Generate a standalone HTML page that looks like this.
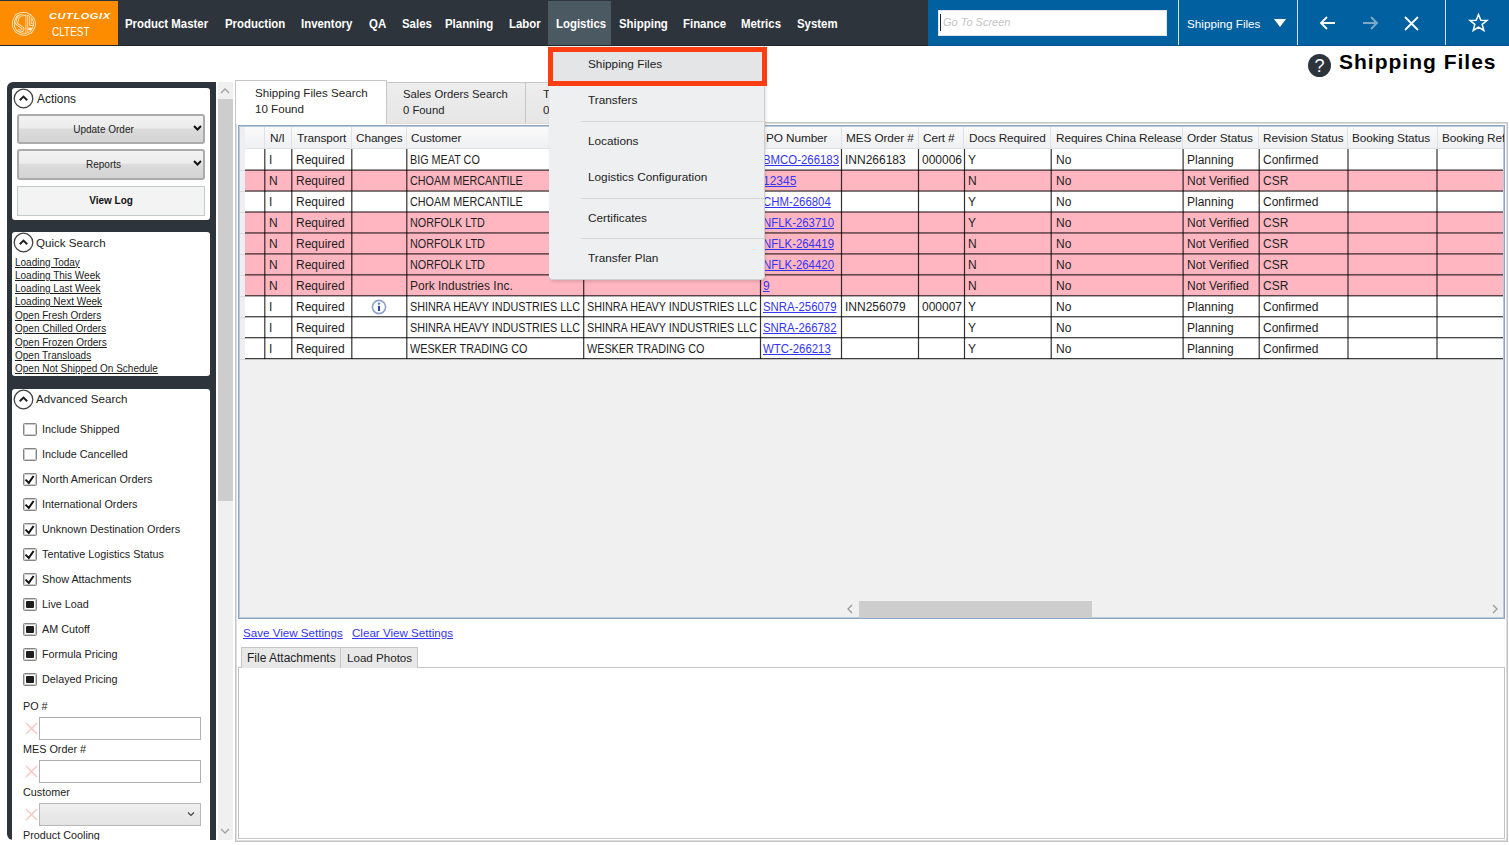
<!DOCTYPE html><html><head><meta charset="utf-8"><title>Shipping Files</title><style>
*{box-sizing:border-box;margin:0;padding:0}
html,body{width:1509px;height:845px;overflow:hidden;background:#fff;font-family:"Liberation Sans",sans-serif;color:#1e1e1e}
body{position:relative}
.a{position:absolute;white-space:nowrap}
.nav{top:17px;font-weight:bold;font-size:12.7px;color:#fff;line-height:15px;transform:scaleX(0.9);transform-origin:0 0}
.vsep{top:0;width:1px;height:45px;background:#cfe0ee}
.box{background:#fff;border-radius:3px}
.circ{width:19px;height:19px;border:1.3px solid #3a3a3a;border-radius:50%}
.ttl{font-size:12px;color:#222;line-height:14px}
.btn{border:2px solid #ababab;border-radius:3px;background:linear-gradient(#f2f2f2 0,#ececec 45%,#dcdcdc 50%,#d3d3d3 100%);font-size:10px;text-align:center;color:#222}
.ql{font-size:10px;color:#1a1a1a;text-decoration:underline;line-height:12px;left:15px}
.cb{width:14px;height:13px;border:1px solid #858585;box-shadow:inset 0 0 0 1px rgba(140,140,140,0.45);border-radius:1.5px;background:#fff;left:23px}
.cbl{font-size:10.8px;color:#222;left:42px;line-height:13px}
.lbl{font-size:10.8px;color:#222;left:23px;line-height:13px}
.inp{left:39px;width:162px;height:23px;border:1px solid #b0b0b0;background:#fff}
.xic{left:25px;width:13px;height:13px}
.row{left:245px;width:1258px;height:21px}
.cell{font-size:12px;line-height:14px;color:#1e1e1e}
.uc{transform:scaleX(0.9);transform-origin:0 0}
.uc2{transform:scaleX(0.95);transform-origin:0 0}
.lnk{color:#3434f4;text-decoration:underline}
.vl{width:2px;background:linear-gradient(90deg,#1e1e1e 50%,#767676 50%)}
.hl{height:2px;background:linear-gradient(#767676 50%,#2a2a2a 50%)}
.hd{font-size:12px;line-height:14px;color:#222;top:131px;letter-spacing:-0.1px}
.hsep{top:127px;width:1px;height:21px;background:#dfe2e5}
.mi{font-size:11.8px;color:#222;left:588px;line-height:14px}
.msep{left:581px;width:183px;height:1px;background:#d6d6d6}
</style></head><body>
<div class="a" style="left:0;top:0;width:1509px;height:46px;background:#2e343b;border-bottom:1px solid #23282d"></div>
<div class="a" style="left:0;top:1px;width:118px;height:44px;background:#fd8c00"></div>
<svg class="a" style="left:8px;top:8px" width="32" height="32" viewBox="0 0 32 32" fill="none" stroke-linejoin="round" stroke-linecap="round">
<g stroke="#ffe6c0" stroke-width="2.7">
<path d="M8.3 7.3 L12.6 5.4 L18 5.5 L22.5 7.8 L25.5 11.4 L26.8 15.9 L25.6 20.1 L22.9 24.2 L18.1 26.3 L12.6 25.9 L8.2 23.4 L5.5 18.7 L5.4 13.4 Z"/><path d="M17.2 6.7 Q11 6.6 10.2 9.6 L8.4 15.6 L15 20.3 Q15.6 23 12.5 23.2 L10.9 22.6"/><path d="M18.8 6 V24.6"/><path d="M22.3 9 V16.6 H24.4"/><path d="M21.4 20.9 H22.8"/>
</g>
<g stroke="#fd8c00" stroke-width="1">
<path d="M8.3 7.3 L12.6 5.4 L18 5.5 L22.5 7.8 L25.5 11.4 L26.8 15.9 L25.6 20.1 L22.9 24.2 L18.1 26.3 L12.6 25.9 L8.2 23.4 L5.5 18.7 L5.4 13.4 Z"/><path d="M17.2 6.7 Q11 6.6 10.2 9.6 L8.4 15.6 L15 20.3 Q15.6 23 12.5 23.2 L10.9 22.6"/><path d="M18.8 6 V24.6"/><path d="M22.3 9 V16.6 H24.4"/>
</g>
</svg>
<div class="a" style="left:49px;top:11px;font-size:9px;font-weight:bold;font-style:italic;color:#fff;letter-spacing:0.5px;line-height:10px;transform:scaleX(1.22);transform-origin:0 0">CUTLOGIX</div>
<div class="a" style="left:52px;top:25px;font-size:12.5px;color:#fff;line-height:14px;transform:scaleX(0.8);transform-origin:0 0">CLTEST</div>
<div class="a" style="left:548px;top:1px;width:63px;height:44px;background:#4b5963"></div>
<div class="a nav" style="left:125px">Product Master</div>
<div class="a nav" style="left:225px">Production</div>
<div class="a nav" style="left:301px">Inventory</div>
<div class="a nav" style="left:369px">QA</div>
<div class="a nav" style="left:402px">Sales</div>
<div class="a nav" style="left:445px">Planning</div>
<div class="a nav" style="left:509px">Labor</div>
<div class="a nav" style="left:556px">Logistics</div>
<div class="a nav" style="left:619px">Shipping</div>
<div class="a nav" style="left:683px">Finance</div>
<div class="a nav" style="left:741px">Metrics</div>
<div class="a nav" style="left:797px">System</div>
<div class="a" style="left:928px;top:0;width:581px;height:46px;background:#0060a0;border-bottom:1px solid #00538a"></div>
<div class="a" style="left:938px;top:10px;width:229px;height:26px;background:#fff;border:1px solid #dde6ee"></div>
<div class="a" style="left:940px;top:14px;width:1px;height:17px;background:#222"></div>
<div class="a" style="left:943px;top:15px;font-size:11px;font-style:italic;color:#c4c4c4;line-height:14px">Go To Screen</div>
<div class="a vsep" style="left:1178px"></div>
<div class="a vsep" style="left:1297px"></div>
<div class="a vsep" style="left:1445px"></div>
<div class="a" style="left:1187px;top:17px;font-size:11.7px;color:#fff;line-height:14px">Shipping Files</div>
<svg class="a" style="left:1273px;top:18px" width="14" height="10" viewBox="0 0 14 10"><path d="M1 1 H13 L7 9 Z" fill="#fff"/></svg>
<svg class="a" style="left:1318px;top:14px" width="20" height="18" viewBox="0 0 20 18" fill="none" stroke="#fff" stroke-width="1.8"><path d="M17 9 H3 M9 3 L3 9 L9 15"/></svg>
<svg class="a" style="left:1360px;top:14px" width="20" height="18" viewBox="0 0 20 18" fill="none" stroke="#7fa9c9" stroke-width="1.8"><path d="M3 9 H17 M11 3 L17 9 L11 15"/></svg>
<svg class="a" style="left:1403px;top:15px" width="17" height="17" viewBox="0 0 17 17" fill="none" stroke="#fff" stroke-width="1.8"><path d="M2 2 L15 15 M15 2 L2 15"/></svg>
<svg class="a" style="left:1468px;top:13px" width="21" height="19" viewBox="0 0 21 19" fill="none" stroke="#fff" stroke-width="1.5" stroke-linejoin="miter"><path d="M10.5 1.5 L12.8 7.2 L19 7.5 L14.2 11.4 L15.8 17.5 L10.5 14.1 L5.2 17.5 L6.8 11.4 L2 7.5 L8.2 7.2 Z"/></svg>
<div class="a" style="left:1308px;top:54px;width:23px;height:23px;border-radius:50%;background:#2e343b"></div>
<div class="a" style="left:1308px;top:56px;width:23px;text-align:center;font-size:18px;font-weight:normal;color:#fff;line-height:20px">?</div>
<div class="a" style="left:1339px;top:50px;font-size:21px;font-weight:bold;color:#000;line-height:24px;letter-spacing:1px">Shipping Files</div>
<div class="a" style="left:7px;top:82px;width:209px;height:758px;background:#2e343b;border-radius:6px 0 0 6px"></div>
<div class="a box" style="left:12px;top:88px;width:198px;height:132px"></div>
<div class="a box" style="left:12px;top:232px;width:198px;height:144px"></div>
<div class="a" style="left:12px;top:389px;width:198px;height:451px;background:#fff;border-radius:3px 3px 0 0"></div>
<svg class="a" style="left:13px;top:88px" width="21" height="21" viewBox="0 0 21 21"><circle cx="10.5" cy="10.5" r="9.3" fill="#fff" stroke="#444" stroke-width="1.3"/><path d="M6.8 12.3 L10.5 8.6 L14.2 12.3" fill="none" stroke="#222" stroke-width="2"/></svg>
<div class="a ttl" style="left:37px;top:92px;font-size:11.9px">Actions</div>
<svg class="a" style="left:13px;top:232px" width="21" height="21" viewBox="0 0 21 21"><circle cx="10.5" cy="10.5" r="9.3" fill="#fff" stroke="#444" stroke-width="1.3"/><path d="M6.8 12.3 L10.5 8.6 L14.2 12.3" fill="none" stroke="#222" stroke-width="2"/></svg>
<div class="a ttl" style="left:36px;top:236px;font-size:11.6px">Quick Search</div>
<svg class="a" style="left:13px;top:389px" width="21" height="21" viewBox="0 0 21 21"><circle cx="10.5" cy="10.5" r="9.3" fill="#fff" stroke="#444" stroke-width="1.3"/><path d="M6.8 12.3 L10.5 8.6 L14.2 12.3" fill="none" stroke="#222" stroke-width="2"/></svg>
<div class="a ttl" style="left:36px;top:392px;font-size:11.6px">Advanced Search</div>
<div class="a btn" style="left:17px;top:114px;width:188px;height:30px;line-height:27px;padding-right:15px">Update Order</div>
<svg class="a" style="left:193px;top:125px" width="9" height="6" viewBox="0 0 9 6"><path d="M1 1 L4.5 4.5 L8 1" fill="none" stroke="#111" stroke-width="2"/></svg>
<div class="a btn" style="left:17px;top:149px;width:188px;height:31px;line-height:28px;padding-right:15px">Reports</div>
<svg class="a" style="left:193px;top:160px" width="9" height="6" viewBox="0 0 9 6"><path d="M1 1 L4.5 4.5 L8 1" fill="none" stroke="#111" stroke-width="2"/></svg>
<div class="a" style="left:17px;top:186px;width:188px;height:30px;border:1.5px solid #c5caca;background:#f3f3f3;font-size:10px;font-weight:bold;text-align:center;line-height:27px;color:#111">View Log</div>
<div class="a ql" style="top:256.5px">Loading Today</div>
<div class="a ql" style="top:270px">Loading This Week</div>
<div class="a ql" style="top:283px">Loading Last Week</div>
<div class="a ql" style="top:296px">Loading Next Week</div>
<div class="a ql" style="top:309.5px">Open Fresh Orders</div>
<div class="a ql" style="top:322.5px">Open Chilled Orders</div>
<div class="a ql" style="top:336.5px">Open Frozen Orders</div>
<div class="a ql" style="top:349.5px">Open Transloads</div>
<div class="a ql" style="top:362.5px">Open Not Shipped On Schedule</div>
<div class="a cb" style="top:423px"></div>
<div class="a cbl" style="top:423px">Include Shipped</div>
<div class="a cb" style="top:448px"></div>
<div class="a cbl" style="top:448px">Include Cancelled</div>
<div class="a cb" style="top:473px"></div>
<svg class="a" style="left:23px;top:473px" width="14" height="14" viewBox="0 0 14 14"><path d="M2.5 6.6 L5.8 9.9 L10.6 3" fill="none" stroke="#111" stroke-width="2"/></svg>
<div class="a cbl" style="top:473px">North American Orders</div>
<div class="a cb" style="top:498px"></div>
<svg class="a" style="left:23px;top:498px" width="14" height="14" viewBox="0 0 14 14"><path d="M2.5 6.6 L5.8 9.9 L10.6 3" fill="none" stroke="#111" stroke-width="2"/></svg>
<div class="a cbl" style="top:498px">International Orders</div>
<div class="a cb" style="top:523px"></div>
<svg class="a" style="left:23px;top:523px" width="14" height="14" viewBox="0 0 14 14"><path d="M2.5 6.6 L5.8 9.9 L10.6 3" fill="none" stroke="#111" stroke-width="2"/></svg>
<div class="a cbl" style="top:523px">Unknown Destination Orders</div>
<div class="a cb" style="top:548px"></div>
<svg class="a" style="left:23px;top:548px" width="14" height="14" viewBox="0 0 14 14"><path d="M2.5 6.6 L5.8 9.9 L10.6 3" fill="none" stroke="#111" stroke-width="2"/></svg>
<div class="a cbl" style="top:548px">Tentative Logistics Status</div>
<div class="a cb" style="top:573px"></div>
<svg class="a" style="left:23px;top:573px" width="14" height="14" viewBox="0 0 14 14"><path d="M2.5 6.6 L5.8 9.9 L10.6 3" fill="none" stroke="#111" stroke-width="2"/></svg>
<div class="a cbl" style="top:573px">Show Attachments</div>
<div class="a cb" style="top:598px"></div>
<div class="a" style="left:26px;top:601px;width:8px;height:7px;background:#1e1e1e;border-radius:1px"></div>
<div class="a cbl" style="top:598px">Live Load</div>
<div class="a cb" style="top:623px"></div>
<div class="a" style="left:26px;top:626px;width:8px;height:7px;background:#1e1e1e;border-radius:1px"></div>
<div class="a cbl" style="top:623px">AM Cutoff</div>
<div class="a cb" style="top:648px"></div>
<div class="a" style="left:26px;top:651px;width:8px;height:7px;background:#1e1e1e;border-radius:1px"></div>
<div class="a cbl" style="top:648px">Formula Pricing</div>
<div class="a cb" style="top:673px"></div>
<div class="a" style="left:26px;top:676px;width:8px;height:7px;background:#1e1e1e;border-radius:1px"></div>
<div class="a cbl" style="top:673px">Delayed Pricing</div>
<div class="a lbl" style="top:700px">PO #</div>
<svg class="a" style="left:25px;top:722px" width="13" height="13" viewBox="0 0 13 13"><path d="M1 1 L12 12 M12 1 L1 12" stroke="#f9c4c0" stroke-width="1.4"/></svg>
<div class="a inp" style="top:717px"></div>
<div class="a lbl" style="top:743px">MES Order #</div>
<svg class="a" style="left:25px;top:765px" width="13" height="13" viewBox="0 0 13 13"><path d="M1 1 L12 12 M12 1 L1 12" stroke="#f9c4c0" stroke-width="1.4"/></svg>
<div class="a inp" style="top:760px"></div>
<div class="a lbl" style="top:786px">Customer</div>
<svg class="a" style="left:25px;top:808px" width="13" height="13" viewBox="0 0 13 13"><path d="M1 1 L12 12 M12 1 L1 12" stroke="#f9c4c0" stroke-width="1.4"/></svg>
<div class="a inp" style="top:803px;background:linear-gradient(#efefef,#e3e3e3);border-color:#b8b8b8"></div>
<svg class="a" style="left:187px;top:811px" width="8" height="6" viewBox="0 0 8 6"><path d="M1 1.5 L4 4.5 L7 1.5" fill="none" stroke="#444" stroke-width="1.2"/></svg>
<div class="a lbl" style="top:829px">Product Cooling</div>
<div class="a" style="left:0;top:840px;width:233px;height:5px;background:#fff"></div>
<div class="a" style="left:218px;top:82px;width:15px;height:758px;background:#f0f0f0"></div>
<div class="a" style="left:218px;top:99px;width:15px;height:402px;background:#cdcdcd"></div>
<svg class="a" style="left:220px;top:87px" width="10" height="7" viewBox="0 0 10 7"><path d="M1 6 L5 2 L9 6" fill="none" stroke="#a0a0a0" stroke-width="1.3"/></svg>
<svg class="a" style="left:220px;top:828px" width="10" height="7" viewBox="0 0 10 7"><path d="M1 1 L5 5 L9 1" fill="none" stroke="#a0a0a0" stroke-width="1.3"/></svg>
<div class="a" style="left:235px;top:122px;width:1273px;height:720px;border:1px solid #c4c4c4;box-shadow:inset 1px 1px 0 #dedede,inset -1px -1px 0 #dedede;background:#fff"></div>
<div class="a" style="left:386px;top:82px;width:140px;height:41px;border:1px solid #c6c6c6;border-bottom:none;background:linear-gradient(#ededed,#e6e6e6)"></div>
<div class="a" style="left:525px;top:82px;width:140px;height:41px;border:1px solid #c6c6c6;border-bottom:none;background:linear-gradient(#ededed,#e6e6e6)"></div>
<div class="a" style="left:235px;top:80px;width:152px;height:44px;border:1px solid #c6c6c6;border-bottom:none;background:#fff"></div>
<div class="a cell" style="left:255px;top:85px;line-height:16px;font-size:11.6px">Shipping Files Search<br>10 Found</div>
<div class="a cell" style="left:403px;top:86px;line-height:16px;font-size:11.3px">Sales Orders Search<br>0 Found</div>
<div class="a cell" style="left:543px;top:86px;line-height:16px;font-size:11.6px">Transfers Search<br>0 Found</div>
<div class="a" style="left:238px;top:125px;width:1267px;height:494px;border:1px solid #8ba6c2;box-shadow:inset 1px 1px 0 #b9cadb,inset -1px -1px 0 #b9cadb;background:#f0f0f0"></div>
<div class="a" style="left:240px;top:127px;width:1263px;height:22px;background:linear-gradient(#fafafb,#eff0f2);border-bottom:1px solid #dfe1e3"></div>
<div class="a" style="left:240px;top:127px;width:5px;height:233px;background:#efefef"></div>
<div class="a hsep" style="left:264px"></div>
<div class="a hsep" style="left:291px"></div>
<div class="a hsep" style="left:351px"></div>
<div class="a hsep" style="left:406px"></div>
<div class="a hsep" style="left:583px"></div>
<div class="a hsep" style="left:760px"></div>
<div class="a hsep" style="left:841px"></div>
<div class="a hsep" style="left:918px"></div>
<div class="a hsep" style="left:963px"></div>
<div class="a hsep" style="left:1050px"></div>
<div class="a hsep" style="left:1182px"></div>
<div class="a hsep" style="left:1258px"></div>
<div class="a hsep" style="left:1347px"></div>
<div class="a hsep" style="left:1437px"></div>
<div class="a" style="left:239px;top:126px;width:1265px;height:23px;overflow:hidden">
<div class="a hd" style="left:31px;top:5px;font-size:11.8px">N/I</div>
<div class="a hd" style="left:58px;top:5px;font-size:11.8px">Transport</div>
<div class="a hd" style="left:117px;top:5px;font-size:11.8px">Changes</div>
<div class="a hd" style="left:172px;top:5px;font-size:11.8px">Customer</div>
<div class="a hd" style="left:349px;top:5px;font-size:11.8px">Ship To</div>
<div class="a hd" style="left:527px;top:5px;font-size:11.8px">PO Number</div>
<div class="a hd" style="left:607px;top:5px;font-size:11.8px">MES Order #</div>
<div class="a hd" style="left:684px;top:5px;font-size:11.8px">Cert #</div>
<div class="a hd" style="left:730px;top:5px;font-size:11.8px">Docs Required</div>
<div class="a hd" style="left:817px;top:5px;font-size:11.8px">Requires China Release</div>
<div class="a hd" style="left:948px;top:5px;font-size:11.8px">Order Status</div>
<div class="a hd" style="left:1024px;top:5px;font-size:11.8px">Revision Status</div>
<div class="a hd" style="left:1113px;top:5px;font-size:11.8px">Booking Status</div>
<div class="a hd" style="left:1203px;top:5px;font-size:11.8px">Booking Reference</div>
</div>
<div class="a row" style="top:149px;height:21px;background:#ffffff"></div>
<div class="a" style="left:266px;top:149px;width:25px;height:21px;overflow:hidden"><div class="a cell" style="left:3px;top:4.00px">I</div></div>
<div class="a" style="left:293px;top:149px;width:58px;height:21px;overflow:hidden"><div class="a cell" style="left:3px;top:4.00px">Required</div></div>
<div class="a" style="left:408px;top:149px;width:175px;height:21px;overflow:hidden"><div class="a cell uc" style="left:2px;top:4.00px">BIG MEAT CO</div></div>
<div class="a" style="left:585px;top:149px;width:175px;height:21px;overflow:hidden"><div class="a cell uc" style="left:2px;top:4.00px">BIG MEAT CO</div></div>
<div class="a" style="left:762px;top:149px;width:79px;height:21px;overflow:hidden"><div class="a cell uc2" style="left:1px;top:4.00px"><span class="lnk">BMCO-266183</span></div></div>
<div class="a" style="left:843px;top:149px;width:75px;height:21px;overflow:hidden"><div class="a cell" style="left:2px;top:4.00px">INN266183</div></div>
<div class="a" style="left:920px;top:149px;width:43px;height:21px;overflow:hidden"><div class="a cell" style="left:2px;top:4.00px">000006</div></div>
<div class="a" style="left:965px;top:149px;width:85px;height:21px;overflow:hidden"><div class="a cell" style="left:3px;top:4.00px">Y</div></div>
<div class="a" style="left:1052px;top:149px;width:130px;height:21px;overflow:hidden"><div class="a cell" style="left:4px;top:4.00px">No</div></div>
<div class="a" style="left:1184px;top:149px;width:74px;height:21px;overflow:hidden"><div class="a cell" style="left:3px;top:4.00px">Planning</div></div>
<div class="a" style="left:1260px;top:149px;width:87px;height:21px;overflow:hidden"><div class="a cell" style="left:3px;top:4.00px">Confirmed</div></div>
<div class="a row" style="top:170px;height:21px;background:#ffb6c1"></div>
<div class="a" style="left:266px;top:170px;width:25px;height:21px;overflow:hidden"><div class="a cell" style="left:3px;top:3.95px">N</div></div>
<div class="a" style="left:293px;top:170px;width:58px;height:21px;overflow:hidden"><div class="a cell" style="left:3px;top:3.95px">Required</div></div>
<div class="a" style="left:408px;top:170px;width:175px;height:21px;overflow:hidden"><div class="a cell uc" style="left:2px;top:3.95px">CHOAM MERCANTILE</div></div>
<div class="a" style="left:585px;top:170px;width:175px;height:21px;overflow:hidden"><div class="a cell uc" style="left:2px;top:3.95px">CHOAM MERCANTILE</div></div>
<div class="a" style="left:762px;top:170px;width:79px;height:21px;overflow:hidden"><div class="a cell" style="left:1px;top:3.95px"><span class="lnk">12345</span></div></div>
<div class="a" style="left:965px;top:170px;width:85px;height:21px;overflow:hidden"><div class="a cell" style="left:3px;top:3.95px">N</div></div>
<div class="a" style="left:1052px;top:170px;width:130px;height:21px;overflow:hidden"><div class="a cell" style="left:4px;top:3.95px">No</div></div>
<div class="a" style="left:1184px;top:170px;width:74px;height:21px;overflow:hidden"><div class="a cell" style="left:3px;top:3.95px">Not Verified</div></div>
<div class="a" style="left:1260px;top:170px;width:87px;height:21px;overflow:hidden"><div class="a cell" style="left:3px;top:3.95px">CSR</div></div>
<div class="a row" style="top:191px;height:21px;background:#ffffff"></div>
<div class="a" style="left:266px;top:191px;width:25px;height:21px;overflow:hidden"><div class="a cell" style="left:3px;top:3.90px">I</div></div>
<div class="a" style="left:293px;top:191px;width:58px;height:21px;overflow:hidden"><div class="a cell" style="left:3px;top:3.90px">Required</div></div>
<div class="a" style="left:408px;top:191px;width:175px;height:21px;overflow:hidden"><div class="a cell uc" style="left:2px;top:3.90px">CHOAM MERCANTILE</div></div>
<div class="a" style="left:585px;top:191px;width:175px;height:21px;overflow:hidden"><div class="a cell uc" style="left:2px;top:3.90px">CHOAM MERCANTILE</div></div>
<div class="a" style="left:762px;top:191px;width:79px;height:21px;overflow:hidden"><div class="a cell uc2" style="left:1px;top:3.90px"><span class="lnk">CHM-266804</span></div></div>
<div class="a" style="left:965px;top:191px;width:85px;height:21px;overflow:hidden"><div class="a cell" style="left:3px;top:3.90px">Y</div></div>
<div class="a" style="left:1052px;top:191px;width:130px;height:21px;overflow:hidden"><div class="a cell" style="left:4px;top:3.90px">No</div></div>
<div class="a" style="left:1184px;top:191px;width:74px;height:21px;overflow:hidden"><div class="a cell" style="left:3px;top:3.90px">Planning</div></div>
<div class="a" style="left:1260px;top:191px;width:87px;height:21px;overflow:hidden"><div class="a cell" style="left:3px;top:3.90px">Confirmed</div></div>
<div class="a row" style="top:212px;height:21px;background:#ffb6c1"></div>
<div class="a" style="left:266px;top:212px;width:25px;height:21px;overflow:hidden"><div class="a cell" style="left:3px;top:3.85px">N</div></div>
<div class="a" style="left:293px;top:212px;width:58px;height:21px;overflow:hidden"><div class="a cell" style="left:3px;top:3.85px">Required</div></div>
<div class="a" style="left:408px;top:212px;width:175px;height:21px;overflow:hidden"><div class="a cell uc" style="left:2px;top:3.85px">NORFOLK LTD</div></div>
<div class="a" style="left:585px;top:212px;width:175px;height:21px;overflow:hidden"><div class="a cell uc" style="left:2px;top:3.85px">NORFOLK LTD</div></div>
<div class="a" style="left:762px;top:212px;width:79px;height:21px;overflow:hidden"><div class="a cell uc2" style="left:1px;top:3.85px"><span class="lnk">NFLK-263710</span></div></div>
<div class="a" style="left:965px;top:212px;width:85px;height:21px;overflow:hidden"><div class="a cell" style="left:3px;top:3.85px">Y</div></div>
<div class="a" style="left:1052px;top:212px;width:130px;height:21px;overflow:hidden"><div class="a cell" style="left:4px;top:3.85px">No</div></div>
<div class="a" style="left:1184px;top:212px;width:74px;height:21px;overflow:hidden"><div class="a cell" style="left:3px;top:3.85px">Not Verified</div></div>
<div class="a" style="left:1260px;top:212px;width:87px;height:21px;overflow:hidden"><div class="a cell" style="left:3px;top:3.85px">CSR</div></div>
<div class="a row" style="top:233px;height:21px;background:#ffb6c1"></div>
<div class="a" style="left:266px;top:233px;width:25px;height:21px;overflow:hidden"><div class="a cell" style="left:3px;top:3.80px">N</div></div>
<div class="a" style="left:293px;top:233px;width:58px;height:21px;overflow:hidden"><div class="a cell" style="left:3px;top:3.80px">Required</div></div>
<div class="a" style="left:408px;top:233px;width:175px;height:21px;overflow:hidden"><div class="a cell uc" style="left:2px;top:3.80px">NORFOLK LTD</div></div>
<div class="a" style="left:585px;top:233px;width:175px;height:21px;overflow:hidden"><div class="a cell uc" style="left:2px;top:3.80px">NORFOLK LTD</div></div>
<div class="a" style="left:762px;top:233px;width:79px;height:21px;overflow:hidden"><div class="a cell uc2" style="left:1px;top:3.80px"><span class="lnk">NFLK-264419</span></div></div>
<div class="a" style="left:965px;top:233px;width:85px;height:21px;overflow:hidden"><div class="a cell" style="left:3px;top:3.80px">N</div></div>
<div class="a" style="left:1052px;top:233px;width:130px;height:21px;overflow:hidden"><div class="a cell" style="left:4px;top:3.80px">No</div></div>
<div class="a" style="left:1184px;top:233px;width:74px;height:21px;overflow:hidden"><div class="a cell" style="left:3px;top:3.80px">Not Verified</div></div>
<div class="a" style="left:1260px;top:233px;width:87px;height:21px;overflow:hidden"><div class="a cell" style="left:3px;top:3.80px">CSR</div></div>
<div class="a row" style="top:254px;height:21px;background:#ffb6c1"></div>
<div class="a" style="left:266px;top:254px;width:25px;height:21px;overflow:hidden"><div class="a cell" style="left:3px;top:3.75px">N</div></div>
<div class="a" style="left:293px;top:254px;width:58px;height:21px;overflow:hidden"><div class="a cell" style="left:3px;top:3.75px">Required</div></div>
<div class="a" style="left:408px;top:254px;width:175px;height:21px;overflow:hidden"><div class="a cell uc" style="left:2px;top:3.75px">NORFOLK LTD</div></div>
<div class="a" style="left:585px;top:254px;width:175px;height:21px;overflow:hidden"><div class="a cell uc" style="left:2px;top:3.75px">NORFOLK LTD</div></div>
<div class="a" style="left:762px;top:254px;width:79px;height:21px;overflow:hidden"><div class="a cell uc2" style="left:1px;top:3.75px"><span class="lnk">NFLK-264420</span></div></div>
<div class="a" style="left:965px;top:254px;width:85px;height:21px;overflow:hidden"><div class="a cell" style="left:3px;top:3.75px">N</div></div>
<div class="a" style="left:1052px;top:254px;width:130px;height:21px;overflow:hidden"><div class="a cell" style="left:4px;top:3.75px">No</div></div>
<div class="a" style="left:1184px;top:254px;width:74px;height:21px;overflow:hidden"><div class="a cell" style="left:3px;top:3.75px">Not Verified</div></div>
<div class="a" style="left:1260px;top:254px;width:87px;height:21px;overflow:hidden"><div class="a cell" style="left:3px;top:3.75px">CSR</div></div>
<div class="a row" style="top:275px;height:21px;background:#ffb6c1"></div>
<div class="a" style="left:266px;top:275px;width:25px;height:21px;overflow:hidden"><div class="a cell" style="left:3px;top:3.70px">N</div></div>
<div class="a" style="left:293px;top:275px;width:58px;height:21px;overflow:hidden"><div class="a cell" style="left:3px;top:3.70px">Required</div></div>
<div class="a" style="left:408px;top:275px;width:175px;height:21px;overflow:hidden"><div class="a cell" style="left:2px;top:3.70px">Pork Industries Inc.</div></div>
<div class="a" style="left:762px;top:275px;width:79px;height:21px;overflow:hidden"><div class="a cell" style="left:1px;top:3.70px"><span class="lnk">9</span></div></div>
<div class="a" style="left:965px;top:275px;width:85px;height:21px;overflow:hidden"><div class="a cell" style="left:3px;top:3.70px">N</div></div>
<div class="a" style="left:1052px;top:275px;width:130px;height:21px;overflow:hidden"><div class="a cell" style="left:4px;top:3.70px">No</div></div>
<div class="a" style="left:1184px;top:275px;width:74px;height:21px;overflow:hidden"><div class="a cell" style="left:3px;top:3.70px">Not Verified</div></div>
<div class="a" style="left:1260px;top:275px;width:87px;height:21px;overflow:hidden"><div class="a cell" style="left:3px;top:3.70px">CSR</div></div>
<div class="a row" style="top:296px;height:21px;background:#ffffff"></div>
<div class="a" style="left:266px;top:296px;width:25px;height:21px;overflow:hidden"><div class="a cell" style="left:3px;top:3.65px">I</div></div>
<div class="a" style="left:293px;top:296px;width:58px;height:21px;overflow:hidden"><div class="a cell" style="left:3px;top:3.65px">Required</div></div>
<div class="a" style="left:408px;top:296px;width:175px;height:21px;overflow:hidden"><div class="a cell uc" style="left:2px;top:3.65px">SHINRA HEAVY INDUSTRIES LLC</div></div>
<div class="a" style="left:585px;top:296px;width:175px;height:21px;overflow:hidden"><div class="a cell uc" style="left:2px;top:3.65px">SHINRA HEAVY INDUSTRIES LLC</div></div>
<div class="a" style="left:762px;top:296px;width:79px;height:21px;overflow:hidden"><div class="a cell uc2" style="left:1px;top:3.65px"><span class="lnk">SNRA-256079</span></div></div>
<div class="a" style="left:843px;top:296px;width:75px;height:21px;overflow:hidden"><div class="a cell" style="left:2px;top:3.65px">INN256079</div></div>
<div class="a" style="left:920px;top:296px;width:43px;height:21px;overflow:hidden"><div class="a cell" style="left:2px;top:3.65px">000007</div></div>
<div class="a" style="left:965px;top:296px;width:85px;height:21px;overflow:hidden"><div class="a cell" style="left:3px;top:3.65px">Y</div></div>
<div class="a" style="left:1052px;top:296px;width:130px;height:21px;overflow:hidden"><div class="a cell" style="left:4px;top:3.65px">No</div></div>
<div class="a" style="left:1184px;top:296px;width:74px;height:21px;overflow:hidden"><div class="a cell" style="left:3px;top:3.65px">Planning</div></div>
<div class="a" style="left:1260px;top:296px;width:87px;height:21px;overflow:hidden"><div class="a cell" style="left:3px;top:3.65px">Confirmed</div></div>
<svg class="a" style="left:371px;top:299px" width="16" height="16" viewBox="0 0 16 16"><circle cx="8" cy="8" r="6.6" fill="#fff" stroke="#8ea3c9" stroke-width="1.6"/><circle cx="8" cy="4.6" r="1.2" fill="#5a84d6"/><path d="M8 6.8 V12" stroke="#2a48b0" stroke-width="2.1"/></svg>
<div class="a row" style="top:317px;height:21px;background:#ffffff"></div>
<div class="a" style="left:266px;top:317px;width:25px;height:21px;overflow:hidden"><div class="a cell" style="left:3px;top:3.60px">I</div></div>
<div class="a" style="left:293px;top:317px;width:58px;height:21px;overflow:hidden"><div class="a cell" style="left:3px;top:3.60px">Required</div></div>
<div class="a" style="left:408px;top:317px;width:175px;height:21px;overflow:hidden"><div class="a cell uc" style="left:2px;top:3.60px">SHINRA HEAVY INDUSTRIES LLC</div></div>
<div class="a" style="left:585px;top:317px;width:175px;height:21px;overflow:hidden"><div class="a cell uc" style="left:2px;top:3.60px">SHINRA HEAVY INDUSTRIES LLC</div></div>
<div class="a" style="left:762px;top:317px;width:79px;height:21px;overflow:hidden"><div class="a cell uc2" style="left:1px;top:3.60px"><span class="lnk">SNRA-266782</span></div></div>
<div class="a" style="left:965px;top:317px;width:85px;height:21px;overflow:hidden"><div class="a cell" style="left:3px;top:3.60px">Y</div></div>
<div class="a" style="left:1052px;top:317px;width:130px;height:21px;overflow:hidden"><div class="a cell" style="left:4px;top:3.60px">No</div></div>
<div class="a" style="left:1184px;top:317px;width:74px;height:21px;overflow:hidden"><div class="a cell" style="left:3px;top:3.60px">Planning</div></div>
<div class="a" style="left:1260px;top:317px;width:87px;height:21px;overflow:hidden"><div class="a cell" style="left:3px;top:3.60px">Confirmed</div></div>
<div class="a row" style="top:338px;height:21px;background:#ffffff"></div>
<div class="a" style="left:266px;top:338px;width:25px;height:21px;overflow:hidden"><div class="a cell" style="left:3px;top:3.55px">I</div></div>
<div class="a" style="left:293px;top:338px;width:58px;height:21px;overflow:hidden"><div class="a cell" style="left:3px;top:3.55px">Required</div></div>
<div class="a" style="left:408px;top:338px;width:175px;height:21px;overflow:hidden"><div class="a cell uc" style="left:2px;top:3.55px">WESKER TRADING CO</div></div>
<div class="a" style="left:585px;top:338px;width:175px;height:21px;overflow:hidden"><div class="a cell uc" style="left:2px;top:3.55px">WESKER TRADING CO</div></div>
<div class="a" style="left:762px;top:338px;width:79px;height:21px;overflow:hidden"><div class="a cell uc2" style="left:1px;top:3.55px"><span class="lnk">WTC-266213</span></div></div>
<div class="a" style="left:965px;top:338px;width:85px;height:21px;overflow:hidden"><div class="a cell" style="left:3px;top:3.55px">Y</div></div>
<div class="a" style="left:1052px;top:338px;width:130px;height:21px;overflow:hidden"><div class="a cell" style="left:4px;top:3.55px">No</div></div>
<div class="a" style="left:1184px;top:338px;width:74px;height:21px;overflow:hidden"><div class="a cell" style="left:3px;top:3.55px">Planning</div></div>
<div class="a" style="left:1260px;top:338px;width:87px;height:21px;overflow:hidden"><div class="a cell" style="left:3px;top:3.55px">Confirmed</div></div>
<div class="a" style="left:245px;top:169px;width:1258px;height:1px;background:rgba(0,0,0,0.40)"></div>
<div class="a" style="left:245px;top:170px;width:1258px;height:1px;background:rgba(0,0,0,0.56)"></div>
<div class="a" style="left:245px;top:190px;width:1258px;height:1px;background:rgba(0,0,0,0.44)"></div>
<div class="a" style="left:245px;top:191px;width:1258px;height:1px;background:rgba(0,0,0,0.52)"></div>
<div class="a" style="left:245px;top:211px;width:1258px;height:1px;background:rgba(0,0,0,0.48)"></div>
<div class="a" style="left:245px;top:212px;width:1258px;height:1px;background:rgba(0,0,0,0.48)"></div>
<div class="a" style="left:245px;top:232px;width:1258px;height:1px;background:rgba(0,0,0,0.52)"></div>
<div class="a" style="left:245px;top:233px;width:1258px;height:1px;background:rgba(0,0,0,0.44)"></div>
<div class="a" style="left:245px;top:253px;width:1258px;height:1px;background:rgba(0,0,0,0.56)"></div>
<div class="a" style="left:245px;top:254px;width:1258px;height:1px;background:rgba(0,0,0,0.40)"></div>
<div class="a" style="left:245px;top:274px;width:1258px;height:1px;background:rgba(0,0,0,0.60)"></div>
<div class="a" style="left:245px;top:275px;width:1258px;height:1px;background:rgba(0,0,0,0.36)"></div>
<div class="a" style="left:245px;top:295px;width:1258px;height:1px;background:rgba(0,0,0,0.64)"></div>
<div class="a" style="left:245px;top:296px;width:1258px;height:1px;background:rgba(0,0,0,0.32)"></div>
<div class="a" style="left:245px;top:316px;width:1258px;height:1px;background:rgba(0,0,0,0.68)"></div>
<div class="a" style="left:245px;top:317px;width:1258px;height:1px;background:rgba(0,0,0,0.28)"></div>
<div class="a" style="left:245px;top:337px;width:1258px;height:1px;background:rgba(0,0,0,0.72)"></div>
<div class="a" style="left:245px;top:338px;width:1258px;height:1px;background:rgba(0,0,0,0.24)"></div>
<div class="a" style="left:245px;top:358px;width:1258px;height:1px;background:rgba(0,0,0,0.76)"></div>
<div class="a" style="left:245px;top:359px;width:1258px;height:1px;background:rgba(0,0,0,0.20)"></div>
<div class="a" style="left:264px;top:149px;width:1px;height:210px;background:rgba(0,0,0,0.64)"></div>
<div class="a" style="left:265px;top:149px;width:1px;height:210px;background:rgba(0,0,0,0.32)"></div>
<div class="a" style="left:291px;top:149px;width:1px;height:210px;background:rgba(0,0,0,0.64)"></div>
<div class="a" style="left:292px;top:149px;width:1px;height:210px;background:rgba(0,0,0,0.32)"></div>
<div class="a" style="left:351px;top:149px;width:1px;height:210px;background:rgba(0,0,0,0.64)"></div>
<div class="a" style="left:352px;top:149px;width:1px;height:210px;background:rgba(0,0,0,0.32)"></div>
<div class="a" style="left:406px;top:149px;width:1px;height:210px;background:rgba(0,0,0,0.64)"></div>
<div class="a" style="left:407px;top:149px;width:1px;height:210px;background:rgba(0,0,0,0.32)"></div>
<div class="a" style="left:583px;top:149px;width:1px;height:210px;background:rgba(0,0,0,0.72)"></div>
<div class="a" style="left:584px;top:149px;width:1px;height:210px;background:rgba(0,0,0,0.24)"></div>
<div class="a" style="left:759px;top:149px;width:1px;height:210px;background:rgba(0,0,0,0.08)"></div>
<div class="a" style="left:760px;top:149px;width:1px;height:210px;background:rgba(0,0,0,0.80)"></div>
<div class="a" style="left:761px;top:149px;width:1px;height:210px;background:rgba(0,0,0,0.08)"></div>
<div class="a" style="left:840px;top:149px;width:1px;height:210px;background:rgba(0,0,0,0.08)"></div>
<div class="a" style="left:841px;top:149px;width:1px;height:210px;background:rgba(0,0,0,0.80)"></div>
<div class="a" style="left:842px;top:149px;width:1px;height:210px;background:rgba(0,0,0,0.08)"></div>
<div class="a" style="left:917px;top:149px;width:1px;height:210px;background:rgba(0,0,0,0.08)"></div>
<div class="a" style="left:918px;top:149px;width:1px;height:210px;background:rgba(0,0,0,0.80)"></div>
<div class="a" style="left:919px;top:149px;width:1px;height:210px;background:rgba(0,0,0,0.08)"></div>
<div class="a" style="left:963px;top:149px;width:1px;height:210px;background:rgba(0,0,0,0.08)"></div>
<div class="a" style="left:964px;top:149px;width:1px;height:210px;background:rgba(0,0,0,0.80)"></div>
<div class="a" style="left:965px;top:149px;width:1px;height:210px;background:rgba(0,0,0,0.08)"></div>
<div class="a" style="left:1050px;top:149px;width:1px;height:210px;background:rgba(0,0,0,0.32)"></div>
<div class="a" style="left:1051px;top:149px;width:1px;height:210px;background:rgba(0,0,0,0.64)"></div>
<div class="a" style="left:1182px;top:149px;width:1px;height:210px;background:rgba(0,0,0,0.40)"></div>
<div class="a" style="left:1183px;top:149px;width:1px;height:210px;background:rgba(0,0,0,0.56)"></div>
<div class="a" style="left:1258px;top:149px;width:1px;height:210px;background:rgba(0,0,0,0.32)"></div>
<div class="a" style="left:1259px;top:149px;width:1px;height:210px;background:rgba(0,0,0,0.64)"></div>
<div class="a" style="left:1347px;top:149px;width:1px;height:210px;background:rgba(0,0,0,0.48)"></div>
<div class="a" style="left:1348px;top:149px;width:1px;height:210px;background:rgba(0,0,0,0.48)"></div>
<div class="a" style="left:1436px;top:149px;width:1px;height:210px;background:rgba(0,0,0,0.48)"></div>
<div class="a" style="left:1437px;top:149px;width:1px;height:210px;background:rgba(0,0,0,0.48)"></div>
<div class="a" style="left:240px;top:170px;width:5px;height:1px;background:#dcdcdc"></div>
<div class="a" style="left:240px;top:191px;width:5px;height:1px;background:#dcdcdc"></div>
<div class="a" style="left:240px;top:212px;width:5px;height:1px;background:#dcdcdc"></div>
<div class="a" style="left:240px;top:233px;width:5px;height:1px;background:#dcdcdc"></div>
<div class="a" style="left:240px;top:254px;width:5px;height:1px;background:#dcdcdc"></div>
<div class="a" style="left:240px;top:275px;width:5px;height:1px;background:#dcdcdc"></div>
<div class="a" style="left:240px;top:296px;width:5px;height:1px;background:#dcdcdc"></div>
<div class="a" style="left:240px;top:317px;width:5px;height:1px;background:#dcdcdc"></div>
<div class="a" style="left:240px;top:338px;width:5px;height:1px;background:#dcdcdc"></div>
<div class="a" style="left:240px;top:359px;width:5px;height:1px;background:#dcdcdc"></div>
<div class="a" style="left:859px;top:601px;width:233px;height:17px;background:#cdcdcd"></div>
<svg class="a" style="left:846px;top:604px" width="8" height="10" viewBox="0 0 8 10"><path d="M6 1 L2 5 L6 9" fill="none" stroke="#9a9a9a" stroke-width="1.3"/></svg>
<svg class="a" style="left:1491px;top:604px" width="8" height="10" viewBox="0 0 8 10"><path d="M2 1 L6 5 L2 9" fill="none" stroke="#9a9a9a" stroke-width="1.3"/></svg>
<div class="a cell lnk" style="left:243px;top:626px;font-size:11.6px">Save View Settings</div>
<div class="a cell lnk" style="left:352px;top:626px;font-size:11.6px">Clear View Settings</div>
<div class="a" style="left:238px;top:667px;width:1267px;height:172px;border:1.5px solid #c4c4c4;background:#fff"></div>
<div class="a" style="left:241px;top:647px;width:100px;height:21px;border:1px solid #c6c6c6;border-bottom:none;background:#e8e8e8"></div>
<div class="a" style="left:340px;top:647px;width:78px;height:21px;border:1px solid #c6c6c6;border-bottom:none;background:#e8e8e8"></div>
<div class="a cell" style="left:247px;top:651px;font-size:12px">File Attachments</div>
<div class="a cell" style="left:347px;top:651px;font-size:11.6px">Load Photos</div>
<div class="a" style="left:549px;top:46px;width:216px;height:234px;background:#eeeff0;border-right:1px solid #cfcfcf;border-bottom:1px solid #d2d2d2;border-radius:0 0 4px 4px;box-shadow:1px 2px 3px rgba(0,0,0,0.12)"></div>
<div class="a" style="left:548px;top:47px;width:219px;height:39px;border:5px solid #ff3d12;background:#e4e5e7"></div>
<div class="a mi" style="top:57px">Shipping Files</div>
<div class="a mi" style="top:93px">Transfers</div>
<div class="a mi" style="top:134px">Locations</div>
<div class="a mi" style="top:170px">Logistics Configuration</div>
<div class="a mi" style="top:211px">Certificates</div>
<div class="a mi" style="top:251px">Transfer Plan</div>
<div class="a msep" style="top:121px"></div>
<div class="a msep" style="top:198px"></div>
<div class="a msep" style="top:238px"></div>
</body></html>
